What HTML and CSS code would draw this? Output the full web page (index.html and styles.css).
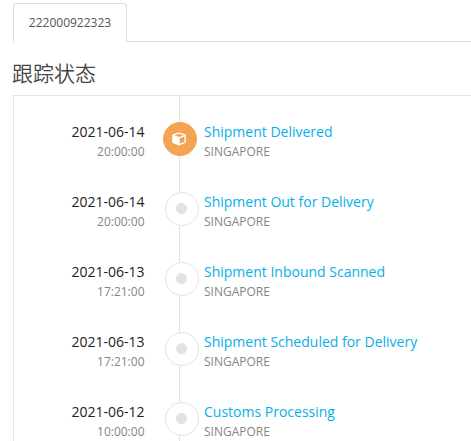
FILE: index.html
```html
<!DOCTYPE html>
<html lang="zh-CN">
<head>
  <meta charset="UTF-8" />
  <meta name="viewport" content="width=device-width, initial-scale=1.0"/>
  <title>跟踪状态</title>
  <link rel="stylesheet" href="styles.css">
</head>
<body>
  <div class="tabs">
    <div class="tab">222000922323</div>
  </div>

  <h2>跟踪状态</h2>

  <div class="timeline">
    <div class="event active">
      <div class="when">
        <div class="date">2021-06-14</div>
        <div class="time">20:00:00</div>
      </div>
      <div class="marker">
        <svg class="cube" viewBox="0 0 14 14">
          <path fill="#fff" fill-rule="evenodd" d="M7 .5 13.2 2.3 13.8 3.2v7L13.2 11 7 13.5.8 11 .2 10.2v-7L.8 2.3ZM7 1.7 2.4 3.3 7 5l4.6-1.7ZM7.7 6.3v5.5l4.7-1.9V4.5Z"/>
        </svg>
      </div>
      <div class="what">
        <a class="status">Shipment Delivered</a>
        <div class="place">SINGAPORE</div>
      </div>
    </div>

    <div class="event">
      <div class="when">
        <div class="date">2021-06-14</div>
        <div class="time">20:00:00</div>
      </div>
      <div class="marker"><span class="dot"></span></div>
      <div class="what">
        <a class="status">Shipment Out for Delivery</a>
        <div class="place">SINGAPORE</div>
      </div>
    </div>

    <div class="event">
      <div class="when">
        <div class="date">2021-06-13</div>
        <div class="time">17:21:00</div>
      </div>
      <div class="marker"><span class="dot"></span></div>
      <div class="what">
        <a class="status">Shipment Inbound Scanned</a>
        <div class="place">SINGAPORE</div>
      </div>
    </div>

    <div class="event">
      <div class="when">
        <div class="date">2021-06-13</div>
        <div class="time">17:21:00</div>
      </div>
      <div class="marker"><span class="dot"></span></div>
      <div class="what">
        <a class="status">Shipment Scheduled for Delivery</a>
        <div class="place">SINGAPORE</div>
      </div>
    </div>

    <div class="event">
      <div class="when">
        <div class="date">2021-06-12</div>
        <div class="time">10:00:00</div>
      </div>
      <div class="marker"><span class="dot"></span></div>
      <div class="what">
        <a class="status">Customs Processing</a>
        <div class="place">SINGAPORE</div>
      </div>
    </div>
  </div>
</body>
</html>
```
FILE: styles.css
```css
* {
  box-sizing: border-box;
}

body {
  font-family: "Open Sans", "Noto Sans CJK SC", sans-serif;
  margin: 0;
  padding: 3px 0 0 13px;
  height: 441px;
  overflow: hidden;
  background: #fff;
  color: #222;
}

.tabs {
  display: flex;
  height: 39px;
  border-bottom: 1px solid #ddd;
}

.tab {
  width: 114px;
  height: 39px;
  border: 1px solid #ddd;
  border-bottom: none;
  border-radius: 4px 4px 0 0;
  background: #fff;
  color: #555;
  font-size: 12px;
  line-height: 38px;
  text-align: center;
}

h2 {
  margin: 14px 0 0 -1px;
  height: 39px;
  font-family: "Noto Sans CJK SC", sans-serif;
  font-size: 21px;
  font-weight: 350;
  line-height: 32px;
  color: #444;
}

.timeline {
  height: 346px;
  overflow: hidden;
  border-top: 1px solid #e2e2e2;
  border-left: 1px solid #e2e2e2;
  padding-top: 26px;
  /* vertical line running behind the markers */
  background: linear-gradient(#e2e2e2, #e2e2e2) 165px 0 / 1px 100% no-repeat;
}

.event {
  display: flex;
  height: 70px;
}

.event:last-child {
  height: 48px;
}

.when {
  width: 130.5px;
  text-align: right;
}

.date,
.status {
  display: block;
  font-size: 14px;
  line-height: 20px;
}

.status {
  color: #05b0ea;
}

.time,
.place {
  font-size: 12px;
  line-height: 20px;
  color: #858585;
}

.marker {
  display: flex;
  justify-content: center;
  align-items: center;
  width: 34px;
  height: 34px;
  margin: 0 5.5px 0 20.5px;
  border: 1px solid #e2e2e2;
  border-radius: 50%;
  background: #fff;
}

.what {
  margin-left: -0.5px;
}

.dot {
  width: 11px;
  height: 11px;
  margin: 0 1px 1px 0;
  border-radius: 50%;
  background: #e2e2e2;
}

.active .marker {
  margin: 0 7.5px 0 18.5px;
  border-color: #f4a452;
  background: #f4a452;
}

.cube {
  width: 14px;
  height: 14px;
  margin-right: 2px;
}
```
